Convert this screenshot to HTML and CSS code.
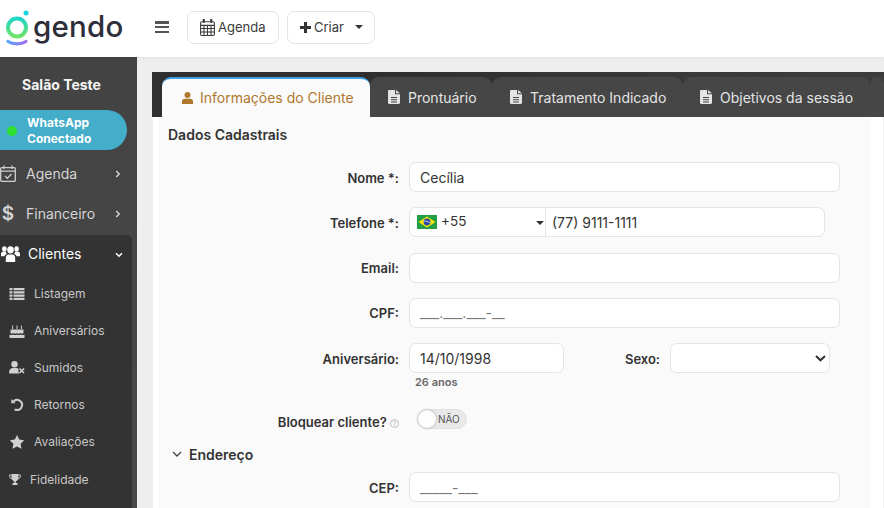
FILE: index.html
```html
<!DOCTYPE html>
<html lang="pt-BR">
<head>
<meta charset="utf-8">
<title>Gendo</title>
<link rel="stylesheet" href="styles.css">
</head>
<body>
<svg class="defs" width="0" height="0" aria-hidden="true">
  <defs>
    <symbol id="doc" viewBox="0 0 12 14"><path d="M0 1.2C0 .5.5 0 1.2 0H7v3.4c0 .5.4.9.9.9H12v8.5c0 .7-.5 1.2-1.2 1.2H1.2C.5 14 0 13.500 0 12.800ZM8 0l4 3.300H8ZM3 7v1h6V7Zm0 2.200v1h6v-1Zm0 2.200v1h6v-1Z" fill-rule="evenodd"/></symbol>
    <linearGradient id="ring" x1="0" y1="0" x2="0" y2="1"><stop offset="0" stop-color="#1fd6c6"/><stop offset="1" stop-color="#6fe36a"/></linearGradient>
    <linearGradient id="smile" x1="0" y1="0" x2="1" y2="0"><stop offset="0" stop-color="#5aa4f5"/><stop offset="1" stop-color="#a46df2"/></linearGradient>
  </defs>
</svg>
<header class="topbar">
  <div class="logo">
    <svg class="logo-mark" width="30" height="36" viewBox="0 0 30 36">
      <circle cx="14" cy="17.500" r="9" fill="none" stroke="url(#ring)" stroke-width="4"/>
      <circle cx="23" cy="3" r="2.500" fill="#19d5dc"/>
      <path d="M5 31.500c2.500 1.700 6 2.300 9 2.300s6.500-.6 9-2.300" fill="none" stroke="url(#smile)" stroke-width="3.200" stroke-linecap="round"/>
    </svg>
    <span class="logo-text">gendo</span>
  </div>
  <button class="burger" aria-label="Menu"><span></span><span></span><span></span></button>
  <button class="tool-btn agenda-btn">
    <svg width="15" height="17" viewBox="0 0 14 16" fill="none" stroke="#3a3a3a"><rect x=".5" y="2.500" width="13" height="13" rx="1.200"/><path d="M.5 6h13M.5 9h13M.5 12.200h13M3.700 6v9.500M7 6v9.500M10.300 6v9.500"/><path d="M3.500 0v3.500M10.500 0v3.500" stroke-width="2"/></svg>
    Agenda
  </button>
  <button class="tool-btn criar-btn">
    <svg width="11" height="11" viewBox="0 0 11 11"><path d="M4 0h3v4h4v3H7v4H4V7H0V4h4Z" fill="#333"/></svg>
    Criar
    <i class="caret"></i>
  </button>
</header>
<div class="body-row">
  <aside class="sidebar">
    <div class="salon">Salão Teste</div>
    <div class="wa-pill"><i class="wa-dot"></i><span>WhatsApp<br>Conectado</span></div>
    <nav class="nav">
      <a class="nav-item">
        <svg class="nav-ico" width="16" height="17" viewBox="0 0 16 17" fill="none" stroke="#cfcfcf" stroke-width="1.300"><rect x=".7" y="2.700" width="14.600" height="13.600" rx="1"/><path d="M.7 6.200h14.600M4 .5v3.500M12 .5v3.500M5 11l2.300 2.300L11.500 9"/></svg>
        <span>Agenda</span><svg class="chev" width="6" height="8" viewBox="0 0 6 8"><path d="M1.200 1l3 3-3 3" fill="none" stroke="#d0d0d0" stroke-width="1.500"/></svg>
      </a>
      <a class="nav-item fin">
        <span class="dollar">$</span>
        <span>Financeiro</span><svg class="chev" width="6" height="8" viewBox="0 0 6 8"><path d="M1.200 1l3 3-3 3" fill="none" stroke="#d0d0d0" stroke-width="1.500"/></svg>
      </a>
      <div class="group">
        <a class="nav-item open">
          <svg class="nav-ico" width="19" height="17" viewBox="0 0 19 15" preserveAspectRatio="none" fill="#fff"><circle cx="9.500" cy="4.300" r="3.300"/><path d="M4.800 15v-3.600c0-2 1.500-3 3-3h3.400c1.500 0 3 1 3 3V15Z"/><circle cx="3.400" cy="3.500" r="2.300"/><circle cx="15.600" cy="3.500" r="2.300"/><path d="M0 10V8c0-1.400 1-2.200 2.200-2.200h2.500c.3 1 .8 1.600 1.400 2.100-1.500.4-2.300 1-2.600 2.100ZM19 10V8c0-1.400-1-2.200-2.200-2.200h-2.500c-.3 1-.8 1.600-1.400 2.100 1.500.4 2.300 1 2.600 2.100Z"/></svg>
          <span>Clientes</span><svg class="chev down" width="8" height="6" viewBox="0 0 8 6"><path d="M1 1.200l3 3 3-3" fill="none" stroke="#fff" stroke-width="1.500"/></svg>
        </a>
        <a class="sub-item">
          <svg width="15" height="12" viewBox="0 0 15 12" fill="#d0d0d0"><path d="M0 0h3v2.200H0Zm4 0h11v2.200H4ZM0 3.200h3v2.200H0Zm4 0h11v2.200H4ZM0 6.500h3v2.200H0Zm4 0h11v2.200H4ZM0 9.700h3V12H0Zm4 0h11V12H4Z"/></svg>
          <span>Listagem</span>
        </a>
        <a class="sub-item">
          <svg width="15" height="14" viewBox="0 0 15 14" fill="#d0d0d0"><path d="M2.600 1.500h1v3.500h-1Zm4.400 0h1v3.500H7Zm4.400 0h1v3.500h-1Z"/><path d="M1 5.500h13V9c-1 1-2 1-3.200 0-1 1-2.400 1-3.300 0-1 1-2.400 1-3.300 0C3 10 2 10 1 9ZM0 10.600c1.500.8 2.700.6 3.800-.2 1 .9 2.600.9 3.700 0 1 .9 2.700.9 3.700 0 1 .8 2.300 1 3.800.2V14H0Z"/></svg>
          <span>Aniversários</span>
        </a>
        <a class="sub-item">
          <svg width="16" height="13" viewBox="0 0 16 13" fill="#d0d0d0"><circle cx="5.500" cy="3.200" r="3.200"/><path d="M0 12c0-3.400 1.800-5 3.800-5h3.400c1 0 1.600.3 2.300.8v3.700l.8.900H1c-.6 0-1-.2-1-.4Z"/><path d="M10.500 7.500l4.500 4.500M15 7.500L10.500 12" stroke="#d0d0d0" stroke-width="1.600"/></svg>
          <span>Sumidos</span>
        </a>
        <a class="sub-item">
          <svg width="15" height="13" viewBox="0 0 15 13" fill="none"><path d="M3.800 3.600A5 5 0 1 1 6.500 11.800H5" stroke="#d0d0d0" stroke-width="1.900"/><path d="M1.800 1v4.300h4.300Z" fill="#d0d0d0"/></svg>
          <span>Retornos</span>
        </a>
        <a class="sub-item">
          <svg width="15" height="14" viewBox="0 0 15 14" fill="#d0d0d0"><path d="M7.500 0l2.200 4.600 5 .7-3.600 3.500.9 5-4.500-2.400L3 13.800l.9-5L.3 5.300l5-.7Z"/></svg>
          <span>Avaliações</span>
        </a>
        <a class="sub-item fidel">
          <svg width="12" height="11" viewBox="0 0 12 11" fill="#d0d0d0"><path d="M2.500 0h7v3.500c0 2-1.200 3.300-2.700 3.700V9h1.700v2h-5V9h1.700V7.200C3.700 6.800 2.500 5.500 2.500 3.500Z"/><path d="M2.500 1H.6v1.300c0 1.300 1 2.300 2.400 2.500M9.500 1h1.900v1.300c0 1.300-1 2.300-2.400 2.500" fill="none" stroke="#d0d0d0"/></svg>
          <span>Fidelidade</span>
        </a>
      </div>
    </nav>
  </aside>
  <main class="content">
    <div class="tabs">
      <a class="tab active">
        <svg width="11" height="12" viewBox="0 0 11 12" fill="#b0782c"><circle cx="5.500" cy="3" r="3"/><path d="M0 12V9.500C0 7.800 1.200 6.800 2.600 6.800h5.800C9.800 6.800 11 7.800 11 9.500V12Z"/></svg>
        Informações do Cliente
      </a>
      <a class="tab t1"><svg class="doc" width="12" height="14"><use href="#doc"/></svg>Prontuário</a>
      <a class="tab t2"><svg class="doc" width="12" height="14"><use href="#doc"/></svg>Tratamento Indicado</a>
      <a class="tab t3"><svg class="doc" width="12" height="14"><use href="#doc"/></svg>Objetivos da sessão</a>
      <a class="tab t4"></a>
    </div>
    <div class="card">
    <section class="panel">
      <h2 class="section-title">Dados Cadastrais</h2>
      <div class="row">
        <label class="lbl">Nome *:</label>
        <input class="field wide" value="Cecília">
      </div>
      <div class="row">
        <label class="lbl">Telefone *:</label>
        <div class="phone">
          <div class="ddi">
            <svg class="flag" width="20" height="14" viewBox="0 0 20 14"><rect width="20" height="14" fill="#229e45"/><path d="M10 1.500L18.500 7 10 12.500 1.500 7Z" fill="#f8e509"/><circle cx="10" cy="7" r="3.400" fill="#2b49a3"/><path d="M6.800 6.200c2.300-.3 4.700.4 6.300 1.800" stroke="#fff" stroke-width=".7" fill="none"/></svg>
            <span>+55</span>
            <i class="caret ddi-caret"></i>
          </div>
          <input class="phone-num" value="(77) 9111-1111">
        </div>
      </div>
      <div class="row">
        <label class="lbl">Email:</label>
        <input class="field wide">
      </div>
      <div class="row">
        <label class="lbl">CPF:</label>
        <input class="field wide mask" value="___.___.___-__">
      </div>
      <div class="row split">
        <label class="lbl">Aniversário:</label>
        <input class="field date" value="14/10/1998">
        <label class="lbl-sexo">Sexo:</label>
        <div class="select-box"><svg width="11" height="7" viewBox="0 0 11 7"><path d="M1 1l4.500 4.300L10 1" fill="none" stroke="#333" stroke-width="2"/></svg></div>
      </div>
      <div class="age">26 anos</div>
      <div class="toggle-row">
        <label class="lbl">Bloquear cliente? <svg class="help" width="9" height="9" viewBox="0 0 9 9" fill="none" stroke="#aaa" stroke-width=".7"><circle cx="4.500" cy="4.500" r="4"/><path d="M3.300 3.500c0-1.600 2.500-1.600 2.500 0 0 1-1.300 1-1.300 2M4.500 6.300v.8"/></svg></label>
        <div class="toggle"><i class="knob"></i><span>NÃO</span></div>
      </div>
      <div class="address">
        <svg width="10" height="6" viewBox="0 0 10 6"><path d="M1 1l4 4 4-4" fill="none" stroke="#444" stroke-width="1.300"/></svg>
        <span>Endereço</span>
      </div>
      <div class="row">
        <label class="lbl">CEP:</label>
        <input class="field wide mask" value="_____-___">
      </div>
    </section>
    </div>
  </main>
</div>
</body>
</html>
```
FILE: styles.css
```css
* { box-sizing: border-box; }
html, body { margin: 0; height: 100%; overflow: hidden; }
body { width: 884px; height: 508px; font-family: Inter, "Liberation Sans", sans-serif; background: #eeeeee; color: #333; }
.defs { position: absolute; }
.topbar { height: 57px; padding-bottom: 3px; background: #fff; display: flex; align-items: center; box-shadow: 0 1px 4px rgba(0,0,0,.06); position: relative; z-index: 2; }
.logo { width: 155px; display: flex; align-items: center; padding-left: 3px; height: 54px; }
.logo-mark { flex: none; margin-top: 2px; }
.logo-text { font-family: Inter, sans-serif; font-size: 29.500px; font-weight: 500; color: #2e2e3a; margin-left: 0; letter-spacing: .2px; line-height: 1; padding-bottom: 1px; }
.burger { width: 14px; height: 12px; padding: 0; border: 0; background: none; display: flex; flex-direction: column; justify-content: space-between; margin-right: 18px; }
.burger span { height: 2.500px; background: #555; display: block; }
.tool-btn { height: 33px; background: #fff; border: 1px solid #e4e4e4; border-radius: 7px; font: 400 13px Inter, sans-serif; color: #3a3a3a; display: flex; align-items: center; gap: 3px; padding: 0 0 0 12px; }
.tool-btn svg { flex: none; }
.agenda-btn { width: 92px; margin-right: 8px; }
.criar-btn { width: 88px; }
.caret { display: inline-block; width: 0; height: 0; border: 4px solid transparent; border-top-color: #333; border-bottom: 0; margin-left: 8px; }
.body-row { display: flex; height: 451px; }
.sidebar { width: 137px; flex: none; background: linear-gradient(#434343, #484848); color: #d4d4d4; overflow: hidden; }
.salon { font-weight: 700; font-size: 14px; color: #f5f5f5; text-align: center; padding: 19px 14px 0 0; line-height: 17px; height: 53px; }
.wa-pill { width: 127px; height: 40px; background: #44adc9; border-radius: 0 20px 20px 0; display: flex; align-items: center; font-weight: 700; font-size: 12px; line-height: 16px; color: #fff; }
.wa-pill span { padding-top: 2px; }
.wa-dot { width: 10px; height: 10px; background: #2fe02f; border-radius: 50%; margin: 2px 10px 0 7px; flex: none; }
.nav { padding-top: 4px; }
.nav-item { height: 40px; padding-bottom: 2px; display: flex; align-items: center; font-size: 14px; color: #d4d4d4; position: relative; }
.nav-item .nav-ico { margin: 0 9px 0 0; flex: none; }
.fin .dollar { width: 14px; margin-right: 10px; margin-left: 1px; font-size: 19px; text-align: center; font-weight: 600; line-height: 1; }
.nav-item > span:not(.dollar) { margin-left: 1px; }
.chev { position: absolute; left: 115px; top: 16px; }
.chev.down { top: 17px; }
.group { width: 132px; height: 300px; margin-top: 1px; background: #333333; border-radius: 0 5px 0 0; }
.open { color: #fff; padding-left: 1px; height: 39px; margin-bottom: 2px; }
.open .nav-ico { margin-right: 7px; }
.sub-item { height: 37px; padding-bottom: 2px; display: flex; align-items: center; padding-left: 9px; font-size: 12px; color: #c8c8c8; }
.sub-item svg { width: 16px; margin-right: 9px; flex: none; }
.fidel { padding-bottom: 0; }
.fidel svg { width: 12px; margin-right: 9px; }
.content { flex: 1; min-width: 0; padding: 15px 0 0 15px; }
.tabs { height: 45px; background: linear-gradient(90deg, #2f2f2f 0, #2f2f2f 30%, #363636 60%, #3c3c3c 100%); display: flex; align-items: flex-end; padding-left: 10px; }
.tab { height: 40px; background: #464646; color: #e4e4e4; font-size: 14px; display: flex; align-items: center; gap: 8px; padding-left: 18px; border-radius: 9px 9px 0 0; flex: none; white-space: nowrap; }
.tab.active { width: 208px; background: #fafafa; color: #b0782c; border-top: 2px solid #3fa0e6; padding-left: 20px; gap: 7px; padding-bottom: 1px; }
.t1 { width: 122px; }
.t2 { width: 191px; }
.t3 { width: 187px; padding-left: 17px; }
.t4 { flex: 1; padding: 0; }
.doc { fill: #e4e4e4; flex: none; }
.card { width: 730px; margin-left: 1px; height: 391px; background: #fff; padding-left: 5px; }
.panel { width: 713px; height: 391px; background: #fafafa; padding: 0 0 0 10px; }
.section-title { margin: 0; font-size: 14px; font-weight: 600; color: #333; line-height: 17px; padding-top: 9px; height: 45px; }
.row { display: flex; align-items: center; height: 30px; margin-bottom: 15.330px; }
.lbl { width: 231px; flex: none; text-align: right; font-size: 13px; font-weight: 600; color: #333; margin-right: 10px; white-space: nowrap; padding-top: 1px; }
.field { height: 30px; border: 1px solid #e3e3ea; border-radius: 7px; background: #fff; font: 400 14px Inter, sans-serif; color: #333; padding: 0 10px; outline: none; }
.wide { width: 431px; }
.mask { color: #777; }
.phone { width: 416px; height: 30px; display: flex; border: 1px solid #e3e3ea; border-radius: 7px; background: #fff; }
.ddi { width: 136px; display: flex; align-items: center; padding-left: 7px; border-right: 1px solid #e3e3ea; font-size: 13.500px; position: relative; gap: 4px; }
.ddi span { margin-top: -3px; }
.flag { flex: none; }
.ddi-caret { position: absolute; right: 1px; top: 13px; margin: 0; }
.phone-num { flex: 1; min-width: 0; border: 0; background: none; font: 400 14px Inter, sans-serif; color: #333; padding: 0 6px; outline: none; border-radius: 0 7px 7px 0; }
.split { margin-bottom: 0; }
.date { width: 155px; }
.lbl-sexo { width: 96px; flex: none; text-align: right; font-size: 13px; font-weight: 600; color: #333; margin-right: 10px; padding-top: 1px; }
.select-box { width: 160px; height: 30px; background: #fff; border: 1px solid #e3e3ea; border-radius: 7px; display: flex; align-items: center; justify-content: flex-end; padding-right: 3px; }
.age { margin-left: 247px; font-size: 11px; font-weight: 600; color: #666; line-height: 14px; padding-top: 2px; height: 36px; }
.toggle-row { display: flex; height: 36px; align-items: flex-start; }
.toggle-row .lbl { padding-top: 6px; line-height: 15px; }
.help { vertical-align: -1px; }
.toggle { width: 50px; height: 20px; border-radius: 10px; background: #e9e9e9; border: 1px solid #e2e2e2; display: flex; align-items: center; font-size: 10px; color: #555; position: relative; margin-left: 8px; }
.toggle span { margin-left: 20px; }
.knob { position: absolute; left: 0; top: 0; width: 18px; height: 18px; border-radius: 50%; background: #fdfdfd; box-shadow: 0 0 3px rgba(0,0,0,.3); }
.address { display: flex; align-items: center; height: 20px; padding-bottom: 2px; gap: 7px; padding-left: 4px; font-size: 14px; font-weight: 600; color: #333; margin: 0 0 7px; }
```
